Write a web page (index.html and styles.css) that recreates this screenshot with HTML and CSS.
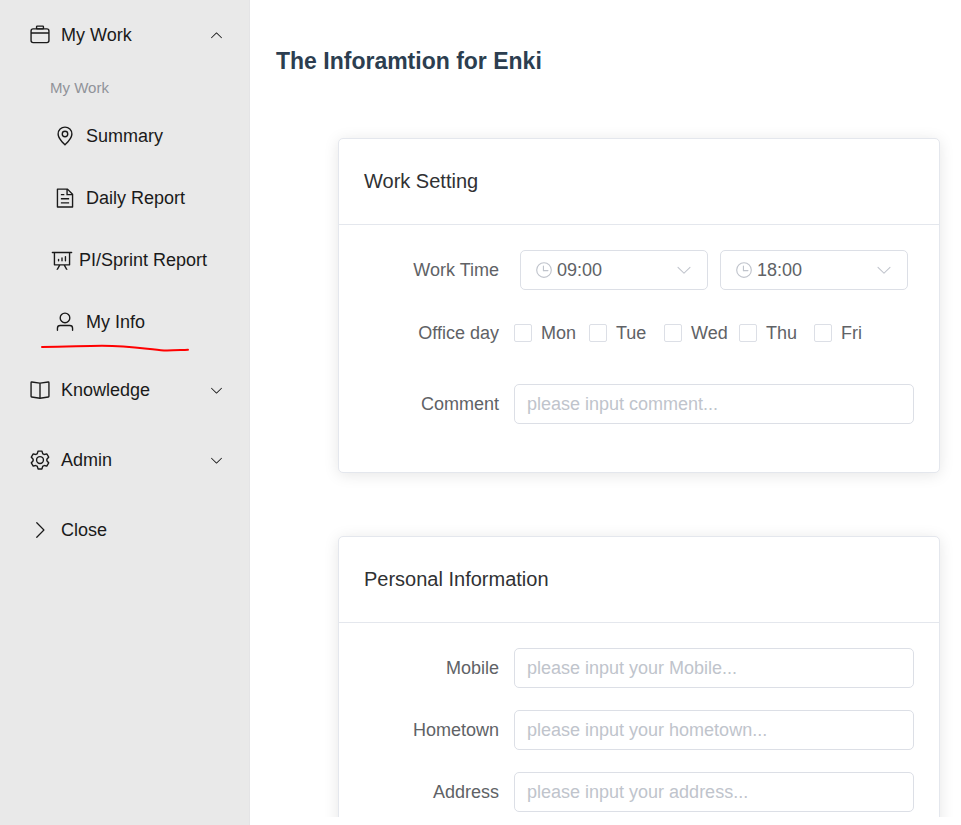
FILE: index.html
```
<!DOCTYPE html>
<html lang="en">
<head>
<meta charset="utf-8">
<title>My Info</title>
<link rel="stylesheet" href="styles.css">
</head>
<body>
<svg class="sprite" aria-hidden="true">
  <symbol id="arrow-down" viewBox="0 0 1024 1024"><path d="M831.872 340.864 512 652.672 192.128 340.864a30.592 30.592 0 0 0-42.752 0 29.12 29.12 0 0 0 0 41.6L489.664 714.24a32 32 0 0 0 44.672 0l340.288-331.712a29.12 29.12 0 0 0 0-41.728 30.592 30.592 0 0 0-42.752 0z"/></symbol>
  <symbol id="clock" viewBox="0 0 1024 1024"><path d="M512 896a384 384 0 1 0 0-768 384 384 0 0 0 0 768zm0 64a448 448 0 1 1 0-896 448 448 0 0 1 0 896z"/><path d="M480 256a32 32 0 0 1 32 32v256a32 32 0 0 1-64 0V288a32 32 0 0 1 32-32z"/><path d="M480 512h256q32 0 32 32t-32 32H480q-32 0-32-32t32-32z"/></symbol>
</svg>
<nav class="sidebar">
  <button class="item" type="button" aria-expanded="true">
    <svg class="icon" viewBox="0 0 1024 1024"><path d="M128 384h768v-64a64 64 0 0 0-64-64H192a64 64 0 0 0-64 64v64zm0 64v320a64 64 0 0 0 64 64h640a64 64 0 0 0 64-64V448H128zm64-256h640a128 128 0 0 1 128 128v448a128 128 0 0 1-128 128H192A128 128 0 0 1 64 768V320a128 128 0 0 1 128-128z"/><path d="M384 128v64h256v-64H384zm0-64h256a64 64 0 0 1 64 64v64a64 64 0 0 1-64 64H384a64 64 0 0 1-64-64v-64a64 64 0 0 1 64-64z"/></svg>
    <span>My Work</span>
    <svg class="caret caret-up"><use href="#arrow-down"/></svg>
  </button>
  <div class="group">
    <div class="group-title">My Work</div>
    <a class="item sub" href="#summary">
      <svg class="icon" viewBox="0 0 1024 1024"><path d="M800 416a288 288 0 1 0-576 0c0 118.144 94.528 272.128 288 456.576C705.472 688.128 800 534.144 800 416zM512 960C277.312 746.688 160 565.312 160 416a352 352 0 0 1 704 0c0 149.312-117.312 330.688-352 544z"/><path d="M512 512a96 96 0 1 0 0-192 96 96 0 0 0 0 192zm0 64a160 160 0 1 1 0-320 160 160 0 0 1 0 320z"/></svg>
      <span>Summary</span>
    </a>
    <a class="item sub" href="#daily">
      <svg class="icon" viewBox="0 0 1024 1024"><path d="M832 384H576V128H192v768h640V384zm-26.496-64L640 154.496V320h165.504zM160 64h480l256 256v608a32 32 0 0 1-32 32H160a32 32 0 0 1-32-32V96a32 32 0 0 1 32-32zm160 448h384v64H320v-64zm0-192h160v64H320v-64zm0 384h384v64H320v-64z"/></svg>
      <span>Daily Report</span>
    </a>
    <a class="item sub compact" href="#sprint">
      <svg class="icon" viewBox="0 0 1024 1024"><path d="m665.216 768 110.848 192h-73.856L591.36 768H433.024L322.176 960H248.32l110.848-192H160a32 32 0 0 1-32-32V192H64a32 32 0 0 1 0-64h896a32 32 0 1 1 0 64h-64v544a32 32 0 0 1-32 32H665.216zM832 192H192v512h640V192zM352 448a32 32 0 0 1 32 32v64a32 32 0 0 1-64 0v-64a32 32 0 0 1 32-32zm160-64a32 32 0 0 1 32 32v128a32 32 0 0 1-64 0V416a32 32 0 0 1 32-32zm160-64a32 32 0 0 1 32 32v192a32 32 0 1 1-64 0V352a32 32 0 0 1 32-32z"/></svg>
      <span>PI/Sprint Report</span>
    </a>
    <a class="item sub" href="#info" aria-current="page">
      <svg class="icon" viewBox="0 0 1024 1024"><path d="M512 512a192 192 0 1 0 0-384 192 192 0 0 0 0 384zm0 64a256 256 0 1 1 0-512 256 256 0 0 1 0 512zm320 320v-96a96 96 0 0 0-96-96H288a96 96 0 0 0-96 96v96a32 32 0 1 1-64 0v-96a160 160 0 0 1 160-160h448a160 160 0 0 1 160 160v96a32 32 0 1 1-64 0z"/></svg>
      <span>My Info</span>
      <svg class="underline" viewBox="0 0 150 10"><path d="M2 4C28 4 42 2.800 62 2.800C92 3 108 6.500 124 7.500C132 7.800 140 7 148 6.700"/></svg>
    </a>
  </div>
  <button class="item" type="button" aria-expanded="false">
    <svg class="icon" viewBox="0 0 1024 1024"><path d="m512 863.360 384-54.848v-638.720L525.568 222.720a96 96 0 0 1-27.136 0L128 169.792v638.720l384 54.848zM137.024 106.432l370.432 52.928a32 32 0 0 0 9.088 0l370.432-52.928A64 64 0 0 1 960 169.792v638.720a64 64 0 0 1-54.976 63.360l-388.480 55.488a32 32 0 0 1-9.088 0l-388.480-55.488A64 64 0 0 1 64 808.512v-638.720a64 64 0 0 1 73.024-63.360z"/><path d="M480 192h64v704h-64z"/></svg>
    <span>Knowledge</span>
    <svg class="caret"><use href="#arrow-down"/></svg>
  </button>
  <button class="item" type="button" aria-expanded="false">
    <svg class="icon" viewBox="0 0 1024 1024"><path d="M600.704 64a32 32 0 0 1 30.464 22.208l35.200 109.376c14.784 7.232 28.928 15.360 42.432 24.512l112.384-24.192a32 32 0 0 1 34.432 15.360L944.320 364.800a32 32 0 0 1-4.032 37.504l-77.120 85.120a357.120 357.120 0 0 1 0 49.024l77.120 85.248a32 32 0 0 1 4.032 37.504l-88.704 153.600a32 32 0 0 1-34.432 15.296L708.800 803.904c-13.440 9.088-27.648 17.280-42.368 24.512l-35.264 109.376A32 32 0 0 1 600.704 960H423.296a32 32 0 0 1-30.464-22.208L357.696 828.480a351.616 351.616 0 0 1-42.560-24.640l-112.320 24.256a32 32 0 0 1-34.432-15.360L79.680 659.200a32 32 0 0 1 4.032-37.504l77.120-85.248a357.120 357.120 0 0 1 0-48.896l-77.120-85.248A32 32 0 0 1 79.680 364.800l88.704-153.600a32 32 0 0 1 34.432-15.296l112.320 24.256c13.568-9.152 27.776-17.408 42.560-24.640l35.200-109.312A32 32 0 0 1 423.232 64H600.640zm-23.424 64H446.720l-36.352 113.088-24.512 11.968a294.113 294.113 0 0 0-34.816 20.096l-22.656 15.360-116.224-25.088-65.280 113.152 79.680 88.192-1.920 27.136a293.120 293.120 0 0 0 0 40.192l1.920 27.136-79.808 88.192 65.344 113.152 116.224-25.024 22.656 15.296a294.113 294.113 0 0 0 34.816 20.096l24.512 11.968L446.720 896h130.688l36.480-113.152 24.448-11.904a288.282 288.282 0 0 0 34.752-20.096l22.592-15.296 116.288 25.024 65.280-113.152-79.744-88.192 1.920-27.136a293.120 293.120 0 0 0 0-40.256l-1.920-27.136 79.808-88.128-65.344-113.152-116.288 24.960-22.592-15.232a287.616 287.616 0 0 0-34.752-20.096l-24.448-11.904L577.344 128zM512 320a192 192 0 1 1 0 384 192 192 0 0 1 0-384zm0 64a128 128 0 1 0 0 256 128 128 0 0 0 0-256z"/></svg>
    <span>Admin</span>
    <svg class="caret"><use href="#arrow-down"/></svg>
  </button>
  <button class="item" type="button">
    <svg class="icon" viewBox="0 0 1024 1024"><path d="M340.864 149.312a30.592 30.592 0 0 0 0 42.752L652.736 512 340.864 831.872a30.592 30.592 0 0 0 0 42.752 29.120 29.120 0 0 0 41.728 0L714.240 534.336a32 32 0 0 0 0-44.672L382.592 149.376a29.120 29.120 0 0 0-41.728 0z"/></svg>
    <span>Close</span>
  </button>
</nav>
<main class="main">
  <h1>The Inforamtion for Enki</h1>
  <section class="card">
    <h2>Work Setting</h2>
    <div class="card-body">
      <div class="row">
        <label class="label" for="start">Work Time</label>
        <div class="times">
          <div class="select">
            <select id="start"><option>09:00</option></select>
            <svg class="select-clock"><use href="#clock"/></svg>
            <svg class="select-caret"><use href="#arrow-down"/></svg>
          </div>
          <div class="select">
            <select aria-label="End time"><option>18:00</option></select>
            <svg class="select-clock"><use href="#clock"/></svg>
            <svg class="select-caret"><use href="#arrow-down"/></svg>
          </div>
        </div>
      </div>
      <div class="row row-days" role="group" aria-labelledby="days">
        <span class="label" id="days">Office day</span>
        <div class="days">
          <label><input type="checkbox"><span>Mon</span></label>
          <label><input type="checkbox"><span>Tue</span></label>
          <label><input type="checkbox"><span>Wed</span></label>
          <label><input type="checkbox"><span>Thu</span></label>
          <label><input type="checkbox"><span>Fri</span></label>
        </div>
      </div>
      <div class="row">
        <label class="label" for="comment">Comment</label>
        <input class="field" id="comment" type="text" placeholder="please input comment...">
      </div>
    </div>
  </section>
  <section class="card">
    <h2>Personal Information</h2>
    <div class="card-body">
      <div class="row">
        <label class="label" for="mobile">Mobile</label>
        <input class="field" id="mobile" type="text" placeholder="please input your Mobile...">
      </div>
      <div class="row">
        <label class="label" for="hometown">Hometown</label>
        <input class="field" id="hometown" type="text" placeholder="please input your hometown...">
      </div>
      <div class="row">
        <label class="label" for="address">Address</label>
        <input class="field" id="address" type="text" placeholder="please input your address...">
      </div>
    </div>
  </section>
</main>
</body>
</html>
```
FILE: styles.css
```
* {
  box-sizing: border-box;
}

body {
  display: flex;
  height: 100vh;
  margin: 0;
  overflow: hidden;
  background: #fff;
  color: #606266;
  font: 18px/24px "Liberation Sans", Arial, sans-serif;
}

button,
input,
select {
  font: inherit;
}

svg {
  fill: currentColor;
}

.sprite {
  position: absolute;
  width: 0;
  height: 0;
}

.sidebar {
  flex: none;
  width: 250px;
  border-right: 1px solid #e4e4e6;
  background: #e9e9e9;
}

.item {
  position: relative;
  display: flex;
  align-items: center;
  width: 100%;
  height: 70px;
  padding: 0 25px 0 29px;
  border: 0;
  background: none;
  color: #1a1a1a;
  text-align: left;
  text-decoration: none;
}

.icon {
  flex: none;
  width: 22px;
  height: 22px;
  margin-right: 10px;
}

.caret {
  width: 15px;
  height: 15px;
  margin-left: auto;
}

.caret-up {
  transform: rotate(180deg);
}

.group {
  padding-bottom: 2px;
}

.group-title {
  padding: 8px 50px 7px;
  color: #909399;
  font-size: 15px;
  line-height: 20px;
}

.sub {
  height: 62px;
  padding-left: 54px;
}

.compact {
  padding-left: 51px;
}

.compact .icon {
  margin-right: 6px;
}

.underline {
  position: absolute;
  left: 40px;
  bottom: 0;
  width: 150px;
  height: 10px;
  fill: none;
  stroke: #f00;
  stroke-width: 2;
  stroke-linecap: round;
}

.main {
  flex: 1;
  min-width: 0;
  margin-bottom: 8px;
  padding: 46px 21px 0 26px;
  overflow-y: auto;
  scrollbar-width: none;
}

h1 {
  margin: 0 0 62px;
  color: #2c3e50;
  font-size: 23px;
  line-height: 30px;
}

.card {
  margin: 0 0 63px 62px;
  border: 1px solid #e4e7ed;
  border-radius: 5px;
  background: #fff;
  box-shadow: 0 2px 15px rgba(0, 0, 0, 0.1);
}

h2 {
  margin: 0;
  padding: 28px 25px;
  border-bottom: 1px solid #e4e7ed;
  color: #303133;
  font-size: 20px;
  font-weight: 400;
  line-height: 29px;
}

.card-body {
  padding: 25px 25px 26px;
}

.row {
  display: flex;
  align-items: center;
  margin-bottom: 22px;
}

.row-days {
  height: 42px;
  margin-bottom: 30px;
}

.label {
  flex: none;
  width: 135px;
  margin-right: 15px;
  text-align: right;
}

.times {
  display: grid;
  flex: 1;
  grid-template-columns: 1fr 1fr;
  gap: 12px;
  padding: 0 6px;
}

.select {
  position: relative;
}

.select select,
.field {
  width: 100%;
  height: 40px;
  border: 1px solid #dcdfe6;
  border-radius: 5px;
  background: #fff;
  color: #606266;
}

.select select {
  display: block;
  padding: 0 36px;
  appearance: none;
}

.select-clock,
.select-caret {
  position: absolute;
  top: 11px;
  width: 18px;
  height: 18px;
  color: #c0c4cc;
  pointer-events: none;
}

.select-clock {
  left: 15px;
}

.select-caret {
  right: 15px;
}

.days {
  display: grid;
  grid-template-columns: repeat(5, 75px);
}

.days label {
  display: flex;
  align-items: center;
  gap: 9px;
}

.days input {
  width: 18px;
  height: 18px;
  margin: 0;
  border: 1px solid #dcdfe6;
  border-radius: 2px;
  background: #fff;
  appearance: none;
}

.days input:checked {
  border-color: #409eff;
  background: #409eff;
}

.field {
  flex: 1;
  min-width: 0;
  padding: 0 12px;
}

.field::placeholder {
  color: #c0c4cc;
  opacity: 1;
}
```
